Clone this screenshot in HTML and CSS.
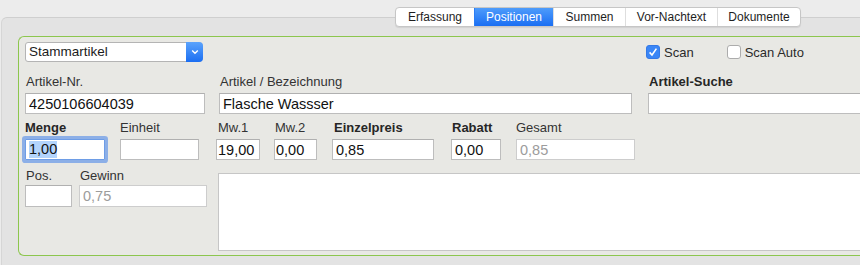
FILE: index.html
```html
<!DOCTYPE html>
<html>

<head>
    <title>Positionen</title>
    <link rel="stylesheet" href="styles.css">
</head>

<body>
    <div class="tabs">
        <span class="tab t1">Erfassung</span>
        <span class="tab t2 active">Positionen</span>
        <span class="tab t3">Summen</span>
        <span class="tab t4">Vor-Nachtext</span>
        <span class="tab t5">Dokumente</span>
    </div>

    <div class="panel">
        <form class="box">
            <div class="row1">
                <div class="select">
                    <span class="select-text">Stammartikel</span>
                    <span class="select-btn">
                        <svg width="8" height="6" viewBox="0 0 8 6"><path d="M1.2 1.5 L4 4.2 L6.8 1.5" fill="none" stroke="#fff" stroke-width="1.4"/></svg>
                    </span>
                </div>
                <div class="checks">
                    <label class="check"><span class="cb on">
                        <svg width="14" height="14" viewBox="0 0 14 14"><path d="M3.6 7.4 L6 10 L10.4 3.6" fill="none" stroke="#fff" stroke-width="1.6"/></svg>
                    </span>Scan</label>
                    <label class="check"><span class="cb"></span>Scan Auto</label>
                </div>
            </div>

            <div class="row row2">
                <div class="field w-nr">
                    <label class="lbl">Artikel-Nr.</label>
                    <input class="inp" type="text" value="4250106604039">
                </div>
                <div class="field w-bez">
                    <label class="lbl">Artikel / Bezeichnung</label>
                    <input class="inp" type="text" value="Flasche Wassser">
                </div>
                <div class="field w-such">
                    <label class="lbl bold">Artikel-Suche</label>
                    <input class="inp" type="text" value="">
                </div>
            </div>

            <div class="row row3">
                <div class="field w-menge">
                    <label class="lbl bold">Menge</label>
                    <div class="inp focus"><span class="sel">1,00</span></div>
                </div>
                <div class="field w-einh">
                    <label class="lbl">Einheit</label>
                    <input class="inp" type="text" value="">
                </div>
                <div class="field w-mw1">
                    <label class="lbl">Mw.1</label>
                    <input class="inp narrow" type="text" value="19,00">
                </div>
                <div class="field w-mw2">
                    <label class="lbl">Mw.2</label>
                    <input class="inp narrow" type="text" value="0,00">
                </div>
                <div class="field w-preis">
                    <label class="lbl bold">Einzelpreis</label>
                    <input class="inp" type="text" value="0,85">
                </div>
                <div class="field w-rabatt">
                    <label class="lbl bold">Rabatt</label>
                    <input class="inp" type="text" value="0,00">
                </div>
                <div class="field w-ges">
                    <label class="lbl">Gesamt</label>
                    <input class="inp off" type="text" value="0,85" disabled>
                </div>
            </div>

            <div class="row row4">
                <div class="field w-pos">
                    <label class="lbl">Pos.</label>
                    <input class="inp tall" type="text" value="">
                </div>
                <div class="field w-gew">
                    <label class="lbl">Gewinn</label>
                    <input class="inp tall off" type="text" value="0,75" disabled>
                </div>
                <textarea class="notes"></textarea>
            </div>
        </form>
    </div>
</body>

</html>
```

FILE: styles.css
```css
body {
    margin: 0;
    padding-top: 7px;
    height: 265px;
    box-sizing: border-box;
    overflow: hidden;
    background-color: #ececec;
    font-family: "Liberation Sans", Arial, sans-serif;
    font-size: 13px;
    color: #333;
}

/* tab bar */
.tabs {
    display: flex;
    position: relative;
    z-index: 1;
    width: max-content;
    height: 20px;
    margin-left: 395px;
    box-sizing: border-box;
    overflow: hidden;
    background-color: #fff;
    border: 1px solid #c6c6c6;
    border-radius: 4px;
    box-shadow: 0 1px 1px rgba(0,0,0,0.08);
    font-size: 12px;
}
.tab {
    display: flex;
    align-items: center;
    justify-content: center;
    box-sizing: border-box;
    border-left: 1px solid #dedede;
    color: #1e1e1e;
}
.tab:first-child { border-left: 0; }
.tab.active {
    background: linear-gradient(#4e9cfb, #1a6ef3);
    border-left-color: #2b7df5;
    color: #fff;
}
.t1 { width: 78px; }
.t2 { width: 79px; }
.t3 { width: 72px; }
.t4 { width: 92px; }
.t5 { width: 83px; }

/* tab panel */
.panel {
    margin: -10px 0 0 1px;
    height: 248px;
    box-sizing: border-box;
    overflow: hidden;
    padding: 18px 0 0 16px;
    background-color: #e3e3e3;
    border-top: 1px solid #cfcfcf;
    border-left: 1px solid #d6d6d6;
    border-top-left-radius: 6px;
}
.box {
    margin: 0;
    padding: 5px 0 4px 6px;
    background-color: #e8e8e4;
    border: 1px solid #8cc64e;
    border-right: 0;
    border-radius: 6px 0 0 6px;
}

/* first row */
.row1 {
    display: flex;
    align-items: center;
    height: 20px;
}
.select {
    display: flex;
    width: 178px;
    height: 20px;
    box-sizing: border-box;
    background-color: #fff;
    border: 1px solid #b4b4b4;
    border-radius: 3px 4px 4px 3px;
}
.select-text {
    flex: 1;
    padding-left: 3px;
    font-size: 13.5px;
    line-height: 18px;
    color: #1c1c1c;
}
.select-btn {
    display: flex;
    align-items: center;
    justify-content: center;
    width: 17px;
    margin: -1px -1px -1px 0;
    background: linear-gradient(#5ba3fc, #1b6ef2);
    border-radius: 0 4px 4px 0;
}
.checks {
    display: flex;
    gap: 33px;
    margin-left: 443px;
}
.check {
    display: flex;
    align-items: center;
    gap: 4px;
    color: #2b2b2b;
}
.cb {
    display: block;
    width: 14px;
    height: 14px;
    box-sizing: border-box;
    background-color: #fff;
    border: 1px solid #acacac;
    border-radius: 3px;
}
.cb.on {
    background-color: #3a86f6;
    border-color: #3479e6;
}
.cb svg {
    display: block;
    margin: -1px;
}

/* field rows */
.row {
    display: flex;
}
.row2 { margin-top: 12px; gap: 14px; }
.row3 { margin-top: 6px; }
.row4 { margin-top: 8px; }

.field {
    display: flex;
    flex-direction: column;
}
.lbl {
    display: block;
    height: 16px;
    line-height: 16px;
    margin-bottom: 3px;
    padding-left: 1px;
    white-space: nowrap;
}
.bold {
    font-weight: bold;
    color: #262626;
}
.inp {
    width: 100%;
    height: 21px;
    margin: 0;
    padding: 0 3px;
    box-sizing: border-box;
    background-color: #fff;
    border: 1px solid #bdbdbd;
    border-top-color: #b0b0b0;
    border-radius: 0;
    outline: none;
    font-family: "Liberation Sans", Arial, sans-serif;
    font-size: 14.5px;
    color: #111;
}
.inp.narrow { padding: 0 1px; }
.inp.tall { height: 22px; }
.inp.off {
    color: #9c9c9c;
    background-color: #fff;
    border-color: #cdcdcd;
}
.inp.focus {
    display: flex;
    align-items: center;
    border-color: #6e9de6;
    border-radius: 1px;
    box-shadow: 0 0 0 3px rgba(84, 140, 232, 0.62);
}
.sel {
    background-color: #b3d4fc;
    line-height: 17px;
}

.w-nr { width: 180px; }
.w-bez { width: 413px; margin-right: 2px; }
.w-such { flex: 1; }
.w-such .inp { border-right: 0; }

.w-menge { width: 80px; }
.w-einh { width: 79px; margin-left: 15px; }
.w-mw1 { width: 44px; margin-left: 17px; }
.w-mw2 { width: 43px; margin-left: 14px; }
.w-preis { width: 102px; margin-left: 15px; }
.w-rabatt { width: 50px; margin-left: 17px; }
.w-ges { width: 119px; margin-left: 15px; }
.w-mw1 .lbl, .w-preis .lbl { padding-left: 2px; }
.w-ges .lbl, .w-einh .lbl, .w-menge .lbl { padding-left: 0; }

.row4 .lbl { margin-bottom: 1px; }
.w-pos { width: 47px; }
.w-gew { width: 128px; margin-left: 7px; }
.notes {
    flex: 1;
    height: 78px;
    margin: 5px 0 0 11px;
    padding: 3px;
    box-sizing: border-box;
    background-color: #fff;
    border: 1px solid #c6c6c6;
    border-right: 0;
    border-radius: 0;
    resize: none;
    outline: none;
}
```
